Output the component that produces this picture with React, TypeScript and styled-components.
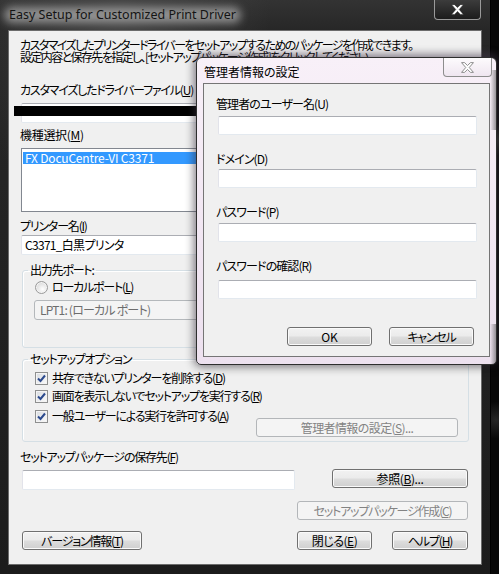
import React from "react";
import styled, { createGlobalStyle } from "styled-components";

const GlobalStyle = createGlobalStyle`
  html, body { margin: 0; padding: 0; }
  body {
    width: 499px;
    height: 574px;
    overflow: hidden;
    background: #0a0a0a;
    font-family: "Noto Sans CJK JP", "Noto Sans", sans-serif;
    font-size: 12px;
    font-feature-settings: "palt" 1;
    letter-spacing: -1.2px;
    color: #000;
  }
`;

const Desktop = styled.div`
  position: relative;
  width: 499px;
  height: 574px;
  overflow: hidden;
  background:
    radial-gradient(ellipse at 496px 140px, #2c2c2c 0, transparent 18px),
    radial-gradient(ellipse at 496px 420px, #262626 0, transparent 22px),
    radial-gradient(ellipse at 240px 572px, #222 0, transparent 60px),
    #080808;
`;

const Window = styled.div`
  width: 491px;
  height: 574px;
  box-sizing: border-box;
  display: flex;
  flex-direction: column;
  padding: 0 8px 9px 8px;
  border-right: 1px solid #000;
  background:
    radial-gradient(ellipse at 120px 14px, #444 0, transparent 150px),
    linear-gradient(to bottom, #333 0, #272727 30px, #1c1c1c 100%);
`;

const TitleBar = styled.div`
  height: 30px;
  display: flex;
  align-items: flex-start;
`;

const Caption = styled.div`
  position: relative;
  isolation: isolate;
  margin: 7px 0 0 1px;
  font-family: "Noto Sans", sans-serif;
  font-feature-settings: normal;
  letter-spacing: 0;
  font-size: 12.5px;
  line-height: 16px;
  color: #141414;

  &::before {
    content: "";
    position: absolute;
    left: -5px;
    right: -5px;
    top: 0;
    bottom: 0;
    z-index: -1;
    border-radius: 9px;
    background: rgba(165, 165, 165, 0.8);
    filter: blur(4px);
  }
`;

const CloseButton = styled.div<{ $light?: boolean }>`
  margin-left: auto;
  width: ${(p) => (p.$light ? 49 : 47)}px;
  height: ${(p) => (p.$light ? 19 : 20)}px;
  box-sizing: border-box;
  display: flex;
  align-items: center;
  justify-content: center;
  border: 1px solid ${(p) => (p.$light ? "#8d8d8d" : "#9a9a9a")};
  border-top: none;
  border-radius: 0 0 4px 4px;
  background: ${(p) =>
    p.$light
      ? "linear-gradient(#fdfbfd, #efe6f0)"
      : "linear-gradient(#3c3c3c, #1c1c1c)"};
`;

const MainClose = styled(CloseButton)`
  margin-right: 1px;
`;

const Client = styled.div`
  position: relative;
  z-index: 0;
  flex: 1;
  display: flex;
  flex-direction: column;
  border: 1px solid #6b6b6b;
  background: #f0f0f0;
  padding: 8px 12px 0 12px;
`;

const Intro = styled.p`
  margin: 0 0 0 -1px;
  line-height: 12px;
  letter-spacing: -1.6px;
  white-space: nowrap;
`;

const Label = styled.div<{ $mt: number; $ls?: number }>`
  margin-top: ${(p) => p.$mt}px;
  margin-left: -1px;
  line-height: 14px;
  white-space: nowrap;
  ${(p) => (p.$ls !== undefined ? `letter-spacing: ${p.$ls}px;` : "")}
`;

const Field = styled.div<{ $mt?: number; $w?: number; $h?: number }>`
  position: relative;
  margin-top: ${(p) => p.$mt ?? 0}px;
  width: ${(p) => (p.$w ? `${p.$w}px` : "auto")};
  height: ${(p) => p.$h ?? 20}px;
  box-sizing: border-box;
  border: 1px solid;
  border-color: #abadb3 #e3e9ef #e3e9ef #e2e3ea;
  border-radius: 2px;
  background: #fff;
  padding-left: 3px;
  line-height: 18px;
  letter-spacing: -0.7px;
  white-space: nowrap;
  overflow: hidden;
`;

const Redaction = styled.div`
  position: absolute;
  left: -7px;
  right: -20px;
  top: 3px;
  height: 10px;
  background: #000;
`;

const FieldWrap = styled.div`
  position: relative;
  margin-top: 6px;
`;

const ListBox = styled.div`
  margin-top: 6px;
  height: 64px;
  box-sizing: border-box;
  border: 1px solid #828790;
  background: #fff;
  padding: 3px 1px;
`;

const ListItem = styled.div<{ $selected?: boolean }>`
  height: 12px;
  line-height: 12px;
  padding-left: 2px;
  letter-spacing: -0.2px;
  background: ${(p) => (p.$selected ? "#3399ff" : "transparent")};
  color: ${(p) => (p.$selected ? "#fff" : "#000")};
`;

const Group = styled.fieldset<{ $mt: number; $pb: number }>`
  margin: ${(p) => p.$mt}px 0 0 1px;
  padding: 0 10px ${(p) => p.$pb}px 12px;
  border: 1px solid #d5dfe5;
  border-radius: 3px;
  box-shadow: inset 1px 1px 0 #fff;
  min-width: 0;
`;

const Legend = styled.legend`
  margin-left: -7px;
  padding: 0 2px;
  line-height: 14px;
`;

const OptionRow = styled.div<{ $mt: number }>`
  display: flex;
  align-items: center;
  gap: 4px;
  margin-top: ${(p) => p.$mt}px;
  height: 14px;
  line-height: 14px;
  white-space: nowrap;
`;

const Radio = styled.span`
  width: 13px;
  height: 13px;
  box-sizing: border-box;
  border-radius: 50%;
  border: 1px solid #9a9a9a;
  background: radial-gradient(circle at 60% 65%, #ffffff 0, #e6e6e6 50%, #cfcfcf 100%);
  box-shadow: inset 0 0 0 1px #f4f4f4;
`;

const Check = styled.span`
  width: 13px;
  height: 13px;
  box-sizing: border-box;
  border: 1px solid #8e8f8f;
  background: linear-gradient(135deg, #d8dbe0, #fbfbfb);
  box-shadow: inset 0 0 0 1px #f4f4f4;
  display: flex;
  align-items: center;
  justify-content: center;
`;

const Combo = styled.div`
  margin: 6px 0 0 -1px;
  height: 20px;
  box-sizing: border-box;
  border: 1px solid #b4b8bb;
  border-radius: 3px;
  background: #f4f4f4;
  color: #6d6d6d;
  padding-left: 5px;
  line-height: 18px;
  letter-spacing: -0.8px;
`;

const Button = styled.div<{ $w: number; $disabled?: boolean; $ls?: number }>`
  width: ${(p) => p.$w}px;
  height: 19px;
  box-sizing: border-box;
  border: 1px solid ${(p) => (p.$disabled ? "#b3b6b9" : "#707070")};
  border-radius: 3px;
  background: ${(p) =>
    p.$disabled
      ? "#f4f4f4"
      : "linear-gradient(#f2f2f2 0%, #ebebeb 48%, #dddddd 52%, #cfcfcf 100%)"};
  box-shadow: ${(p) => (p.$disabled ? "none" : "inset 0 0 0 1px #fafafa")};
  color: ${(p) => (p.$disabled ? "#838383" : "#000")};
  display: flex;
  align-items: center;
  justify-content: center;
  line-height: 17px;
  white-space: nowrap;
  ${(p) => (p.$ls !== undefined ? `letter-spacing: ${p.$ls}px;` : "")}
`;

const LastOptionRow = styled.div`
  display: flex;
  justify-content: space-between;
  align-items: flex-start;
  margin-top: 6px;
`;

const LastOptionButton = styled(Button)`
  margin-top: 9px;
`;

const Row = styled.div<{ $mt: number; $justify?: string }>`
  display: flex;
  align-items: flex-start;
  justify-content: ${(p) => p.$justify ?? "space-between"};
  margin-top: ${(p) => p.$mt}px;
`;

const SaveField = styled(Field)`
  margin-top: 1px;
  margin-left: 1px;
`;

const RightGroup = styled.div`
  display: flex;
  gap: 20px;
  margin-right: 1px;
`;

/* ---------- modal ---------- */

const Dialog = styled.div`
  position: absolute;
  left: 196px;
  top: 57px;
  width: 301px;
  height: 308px;
  box-sizing: border-box;
  display: flex;
  flex-direction: column;
  padding: 0 6px 7px 6px;
  border: 1px solid #2e2e2e;
  border-radius: 6px 6px 5px 5px;
  background:
    linear-gradient(to left, rgba(60, 60, 60, 0.5) 0, rgba(60, 60, 60, 0) 6px) right 0 top 12px / 100% 60px no-repeat,
    linear-gradient(to left, rgba(60, 60, 60, 0.5) 0, rgba(60, 60, 60, 0) 6px) right 0 bottom 0 / 100% 40px no-repeat,
    linear-gradient(#f8f0f8, #f1e6f2 60%, #ede1ef);
  box-shadow: 0 0 10px 2px rgba(0, 0, 0, 0.45), 0 -2px 8px rgba(180, 150, 200, 0.35);
`;

const DialogTitleBar = styled.div`
  height: 25px;
  display: flex;
  align-items: flex-start;
`;

const DialogCaption = styled.div`
  margin: 6px 0 0 1px;
  line-height: 16px;
  letter-spacing: 0;
  color: #000;
`;

const DialogClose = styled(CloseButton)`
  margin-right: -2px;
`;

const DialogClient = styled.div`
  flex: 1;
  display: flex;
  flex-direction: column;
  border: 1px solid #757575;
  background: #f0f0f0;
  padding: 13px 12px 0 12px;
`;

const DialogLabel = styled.div<{ $mt: number }>`
  margin-top: ${(p) => p.$mt}px;
  line-height: 14px;
  letter-spacing: -0.9px;
`;

const DialogField = styled(Field)`
  margin-left: 2px;
  width: 259px;
  height: 19px;
`;

const DialogButtons = styled.div`
  display: flex;
  justify-content: flex-end;
  gap: 17px;
  margin: 28px 3px 0 0;
`;

const XIcon = ({ light }: { light?: boolean }) => (
  <svg width="13" height="11" viewBox="0 0 12 10">
    <polygon
      points="0.5,0.5 3.3,0.5 6,3.2 8.7,0.5 11.5,0.5 7.6,5 11.5,9.5 8.7,9.5 6,6.8 3.3,9.5 0.5,9.5 4.4,5"
      fill="#fff"
      stroke={light ? "#8a8a8a" : "#222"}
      strokeWidth={light ? 0.9 : 0.5}
      strokeLinejoin="round"
    />
  </svg>
);

const CheckMark = () => (
  <svg width="9" height="9" viewBox="0 0 9 9">
    <polyline
      points="1,4.5 3.5,7 8,1.5"
      fill="none"
      stroke="#2c4a8d"
      strokeWidth="2"
    />
  </svg>
);

const Opt = ({ children }: { children: React.ReactNode }) => (
  <>
    <Check>
      <CheckMark />
    </Check>
    <span>{children}</span>
  </>
);

export default function App() {
  return (
    <>
      <GlobalStyle />
      <Desktop>
        <Window>
          <TitleBar>
            <Caption>Easy Setup for Customized Print Driver</Caption>
            <MainClose>
              <XIcon />
            </MainClose>
          </TitleBar>
          <Client>
            <Intro>
              カスタマイズしたプリンタードライバーをセットアップするためのパッケージを作成できます。
              <br />
              設定内容と保存先を指定し、[セットアップパッケージ作成]をクリックしてください。
            </Intro>
            <Label $mt={20}>
              カスタマイズしたドライバーファイル(<u>U</u>)
            </Label>
            <FieldWrap>
              <Field />
              <Redaction />
            </FieldWrap>
            <Label $mt={5} $ls={-0.3}>
              機種選択(<u>M</u>)
            </Label>
            <ListBox>
              <ListItem $selected>FX DocuCentre-VI C3371</ListItem>
            </ListBox>
            <Label $mt={7}>
              プリンター名(<u>I</u>)
            </Label>
            <Field $mt={2}>C3371_白黒プリンタ</Field>

            <Group $mt={8} $pb={27}>
              <Legend>出力先ポート:</Legend>
              <OptionRow $mt={3}>
                <Radio />
                <span>
                  ローカルポート(<u>L</u>)
                </span>
              </OptionRow>
              <Combo>LPT1: (ローカル ポート)</Combo>
            </Group>

            <Group $mt={4} $pb={4}>
              <Legend>セットアップオプション</Legend>
              <OptionRow $mt={5}>
                <Opt>
                  共存できないプリンターを削除する(<u>D</u>)
                </Opt>
              </OptionRow>
              <OptionRow $mt={4}>
                <Opt>
                  画面を表示しないでセットアップを実行する(<u>R</u>)
                </Opt>
              </OptionRow>
              <LastOptionRow>
                <OptionRow $mt={0}>
                  <Opt>
                    一般ユーザーによる実行を許可する(<u>A</u>)
                  </Opt>
                </OptionRow>
                <LastOptionButton $w={202} $disabled $ls={-0.6}>
                  管理者情報の設定(<u>S</u>)...
                </LastOptionButton>
              </LastOptionRow>
            </Group>

            <Label $mt={8}>
              セットアップパッケージの保存先(<u>F</u>)
            </Label>
            <Row $mt={5}>
              <SaveField $w={273} />
              <Button $w={136} $ls={-0.4} style={{ marginRight: 1 }}>
                参照(<u>B</u>)...
              </Button>
            </Row>
            <Row $mt={11} $justify="flex-end">
              <Button $w={171} $disabled style={{ marginRight: 1 }}>
                セットアップパッケージ作成(<u>C</u>)
              </Button>
            </Row>
            <Row $mt={11}>
              <Button $w={120} style={{ marginLeft: 1 }}>
                バージョン情報(<u>T</u>)
              </Button>
              <RightGroup>
                <Button $w={75} $ls={-0.5}>
                  閉じる(<u>E</u>)
                </Button>
                <Button $w={76}>
                  ヘルプ(<u>H</u>)
                </Button>
              </RightGroup>
            </Row>
          </Client>
        </Window>

        <Dialog>
          <DialogTitleBar>
            <DialogCaption>管理者情報の設定</DialogCaption>
            <DialogClose $light>
              <XIcon light />
            </DialogClose>
          </DialogTitleBar>
          <DialogClient>
            <DialogLabel $mt={0}>管理者のユーザー名(U)</DialogLabel>
            <DialogField $mt={5} />
            <DialogLabel $mt={17}>ドメイン(D)</DialogLabel>
            <DialogField $mt={3} />
            <DialogLabel $mt={17}>パスワード(P)</DialogLabel>
            <DialogField $mt={4} />
            <DialogLabel $mt={17}>パスワードの確認(R)</DialogLabel>
            <DialogField $mt={7} />
            <DialogButtons>
              <Button $w={85} $ls={0}>
                OK
              </Button>
              <Button $w={85}>キャンセル</Button>
            </DialogButtons>
          </DialogClient>
        </Dialog>
      </Desktop>
    </>
  );
}
